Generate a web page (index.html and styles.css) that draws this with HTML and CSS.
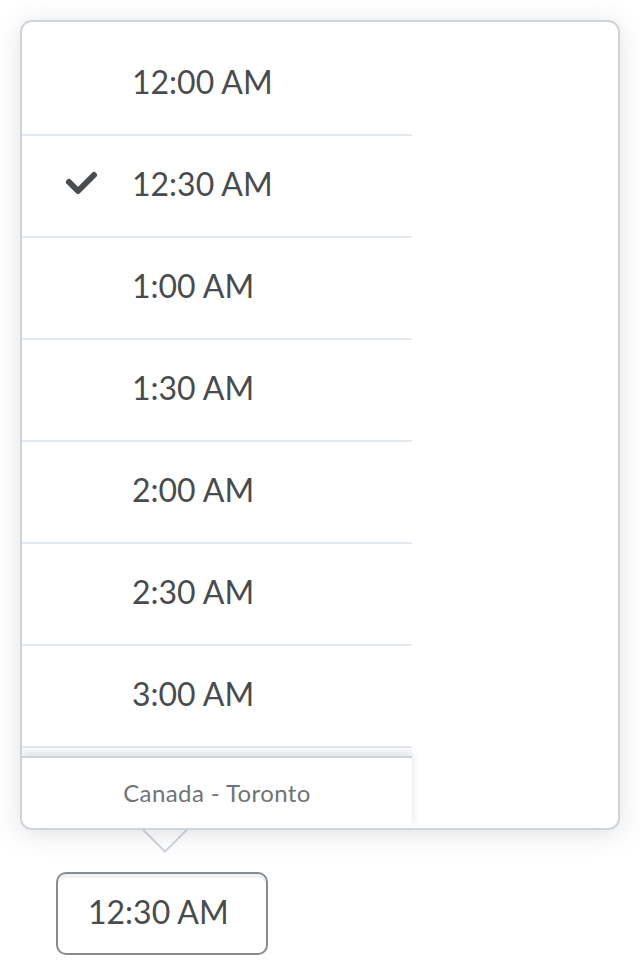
FILE: index.html
```html
<!DOCTYPE html>
<html lang="en">
<head>
<meta charset="utf-8">
<title>Time picker</title>
<link rel="stylesheet" href="styles.css">
</head>
<body>
<div class="page">
  <div class="dropdown-wrap">
    <div class="pointer"></div>
    <div class="dropdown">
      <div class="content">
        <ul class="list">
          <li class="item"><span class="check-slot"></span><span class="label">12:00 AM</span></li>
          <li class="item selected"><span class="check-slot"><svg class="check" viewBox="0 0 36 30" width="36" height="30"><polyline points="6,13 15,22 31,6" fill="none" stroke="#494c4e" stroke-width="6" stroke-linecap="round" stroke-linejoin="round"/></svg></span><span class="label">12:30 AM</span></li>
          <li class="item"><span class="check-slot"></span><span class="label">1:00 AM</span></li>
          <li class="item"><span class="check-slot"></span><span class="label">1:30 AM</span></li>
          <li class="item"><span class="check-slot"></span><span class="label">2:00 AM</span></li>
          <li class="item"><span class="check-slot"></span><span class="label">2:30 AM</span></li>
          <li class="item"><span class="check-slot"></span><span class="label">3:00 AM</span></li>
        </ul>
        <div class="footer">Canada - Toronto</div>
      </div>
    </div>
  </div>
  <div class="input">12:30 AM</div>
</div>
</body>
</html>
```

FILE: styles.css
```css
html, body {
  margin: 0;
  padding: 0;
  background: #ffffff;
}

body {
  font-family: Lato, "Open Sans", sans-serif;
  color: #494c4e;
}

.page {
  padding: 20px 20px 0 20px;
}

.dropdown-wrap {
  position: relative;
  width: 600px;
}

.pointer {
  position: absolute;
  left: 128px;
  top: 792px;
  width: 30px;
  height: 30px;
  background: #ffffff;
  border: 2px solid #cdd5dc;
  transform: rotate(45deg);
  z-index: 0;
}

.dropdown {
  position: relative;
  z-index: 1;
  box-sizing: border-box;
  width: 600px;
  height: 810px;
  border: 2px solid #cdd5dc;
  border-radius: 12px;
  background: #ffffff;
  box-shadow: 0 4px 24px rgba(86, 90, 92, 0.18);
  overflow: hidden;
}

.content {
  width: 390px;
  height: 100%;
  display: flex;
  flex-direction: column;
}

.list {
  list-style: none;
  margin: 0;
  padding: 12px 0 0 0;
  flex: 1;
  overflow: hidden;
}

.item {
  box-sizing: border-box;
  height: 102px;
  border-bottom: 2px solid #e3e9f1;
  display: flex;
  align-items: center;
  padding: 0 0 4px 41px;
  font-size: 32px;
  line-height: 1.2;
  color: #494c4e;
}

.check-slot {
  width: 36px;
  height: 30px;
  margin-right: 33px;
  flex: none;
  display: block;
}

.check {
  display: block;
}

.footer {
  flex: none;
  box-sizing: border-box;
  height: 72px;
  border-top: 2px solid #cdd5dc;
  background: #ffffff;
  display: flex;
  align-items: center;
  justify-content: center;
  padding-bottom: 2px;
  font-size: 24px;
  letter-spacing: 0.4px;
  color: #6e7477;
  box-shadow: 0 -4px 8px rgba(0, 0, 0, 0.12);
  position: relative;
  z-index: 2;
}

.input {
  box-sizing: border-box;
  margin: 42px 0 0 36px;
  width: 212px;
  height: 83px;
  border: 2px solid #868c8f;
  border-radius: 10px;
  box-shadow: inset 0 4px 0 0 rgba(181, 189, 194, 0.2);
  display: flex;
  align-items: center;
  padding: 0 0 2px 30px;
  font-size: 32px;
  line-height: 1.2;
  color: #494c4e;
}
```
